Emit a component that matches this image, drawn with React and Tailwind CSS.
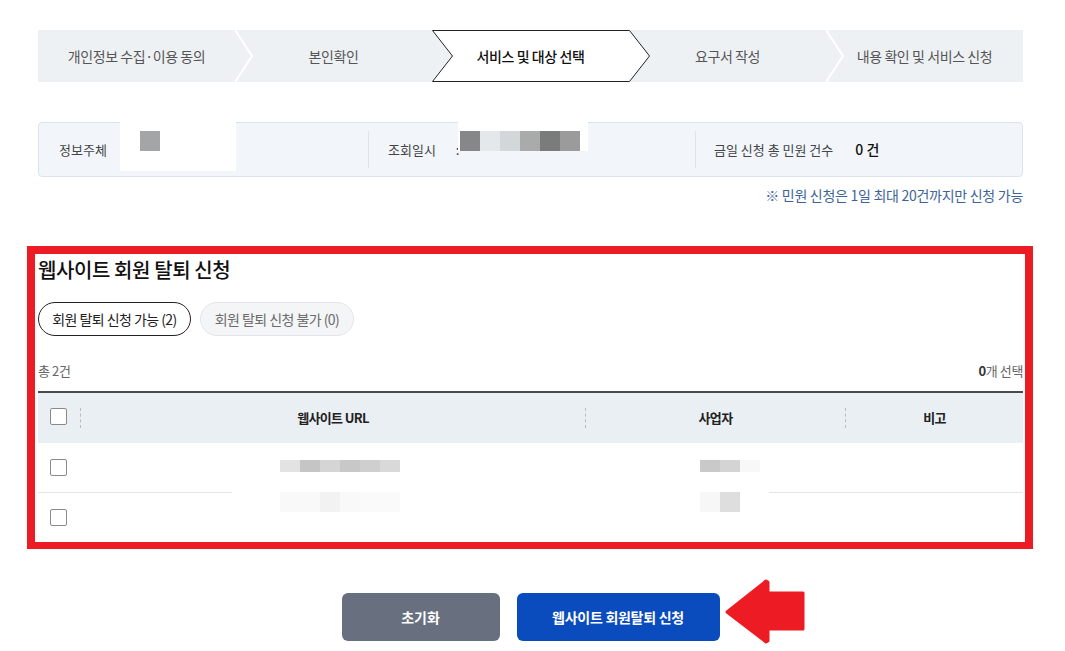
import React from 'react';

const font = { fontFamily: '"Noto Sans CJK KR", "Noto Sans", sans-serif' };

const steps = ['개인정보 수집·이용 동의', '본인확인', '서비스 및 대상 선택', '요구서 작성', '내용 확인 및 서비스 신청'];
const ACTIVE = 2;

function Steps() {
  return (
    <div className="flex h-[52px] bg-[#eef1f4]">
      {steps.map((label, i) => {
        const isActive = i === ACTIVE;
        const showSep = i < steps.length - 1 && i !== ACTIVE && i + 1 !== ACTIVE;
        return (
          <div key={label} className={`relative flex flex-1 items-center justify-center ${isActive ? 'z-20' : ''}`}>
            {isActive && (
              <svg className="absolute left-0 top-0 h-[52px] w-[218px]" viewBox="0 0 218 52">
                <path d="M0.5 0.5 L197.5 0.5 L217.5 26 L197.5 51.5 L0.5 51.5 L20.5 26 Z" fill="#fff" stroke="#222" strokeWidth="1" />
              </svg>
            )}
            <span
              className={`relative text-[14px] tracking-[-0.03em] ${isActive ? 'font-medium text-[#111]' : 'text-[#555]'}`}
            >
              {label}
            </span>
            {showSep && (
              <svg className="absolute left-full top-0 z-10 h-[52px] w-[20px]" viewBox="0 0 20 52">
                <polyline points="0,0 17,26 0,52" fill="none" stroke="#fff" strokeWidth="2" />
              </svg>
            )}
          </div>
        );
      })}
    </div>
  );
}

function InfoBox() {
  return (
    <div className="relative mt-[40px]">
      <div className="flex h-[55px] items-center rounded-[4px] border border-[#dbe4ee] bg-[#f2f6fa] text-[13px] text-[#444]">
        <div className="flex w-[329px] items-center pl-[20px]">
          <span>정보주체</span>
        </div>
        <div className="h-[37px] w-px bg-[#dde3ea]" />
        <div className="flex w-[326px] items-center pl-[19px]">
          <span>조회일시</span>
          <span className="ml-[20px] text-[#333]">:</span>
        </div>
        <div className="h-[37px] w-px bg-[#dde3ea]" />
        <div className="flex flex-1 items-center pl-[18px]">
          <span>금일 신청 총 민원 건수</span>
          <span className="ml-[22px] text-[14px] font-medium text-[#111]">0 건</span>
        </div>
      </div>
      {/* masked values */}
      <div className="absolute left-[82px] top-[-11px] h-[60px] w-[116px] bg-white">
        <div className="ml-[20px] mt-[20px] h-[20px] w-[20px] bg-[#a3a5a6]" />
      </div>
      <div className="absolute left-[420px] top-[-4px] flex h-[33px] w-[130px] items-end bg-white">
        <div className="ml-[2px] flex h-[20px]">
          {['#858788', '#e5e8eb', '#d4d7da', '#a9aaaa', '#7a7c7c', '#9b9b9b'].map((c, i) => (
            <div key={i} className="h-[20px] w-[20px]" style={{ background: c }} />
          ))}
        </div>
      </div>
    </div>
  );
}

function Checkbox() {
  return <div className="h-[17px] w-[17px] rounded-[2px] border-[1.5px] border-[#8a8a8a] bg-white" />;
}

function Blocks({ colors, h }) {
  return (
    <div className="flex">
      {colors.map((c, i) => (
        <div key={i} className="w-[20px]" style={{ background: c, height: h }} />
      ))}
    </div>
  );
}

function Table() {
  return (
    <div className="relative mt-[9px] border-t-2 border-[#4a4a4a]">
      <div className="grid h-[50px] grid-cols-[42px_505px_260px_178px] items-center bg-[#eaeff3] text-[13px] font-bold tracking-[-0.05em] text-[#222]">
        <div className="flex items-center pl-[12px]">
          <div className="-mt-[4px]">
            <Checkbox />
          </div>
        </div>
        <div className="flex h-[20px] items-center justify-center border-l border-dashed border-[#b4bcc4]">웹사이트 URL</div>
        <div className="flex h-[20px] items-center justify-center border-l border-dashed border-[#b4bcc4]">사업자</div>
        <div className="flex h-[20px] items-center justify-center border-l border-dashed border-[#b4bcc4]">비고</div>
      </div>
      <div className="grid h-[50px] grid-cols-[42px_505px_260px_178px] items-center border-b border-[#e6e6e6]">
        <div className="flex items-center pl-[12px]">
          <Checkbox />
        </div>
        <div />
        <div />
        <div />
      </div>
      <div className="grid h-[49px] grid-cols-[42px_505px_260px_178px] items-center">
        <div className="flex items-center pl-[12px]">
          <Checkbox />
        </div>
        <div />
        <div />
        <div />
      </div>
      {/* masked cells */}
      <div className="absolute left-[194px] top-[97px] h-[6px] w-[537px] bg-white" />
      <div className="absolute left-[242px] top-[67px]">
        <Blocks colors={['#e3e3e3', '#c5c5c5', '#d5d5d5', '#c8c8c8', '#cfcfcf', '#d9d9d9']} h={12} />
      </div>
      <div className="absolute left-[242px] top-[99px]">
        <Blocks colors={['#f9f9f9', '#f9f9f9', '#f1f2f1', '#f9f9f9', '#fafafa', '#fafafa']} h={20} />
      </div>
      <div className="absolute left-[662px] top-[67px]">
        <Blocks colors={['#c9c9c9', '#d4d4d4', '#f8f8f8']} h={12} />
      </div>
      <div className="absolute left-[662px] top-[99px]">
        <Blocks colors={['#f6f7f6', '#dedede']} h={20} />
      </div>
    </div>
  );
}

export default function App() {
  return (
    <div className="min-h-[651px] w-[1065px] bg-white pt-[30px]" style={font}>
      <div className="ml-[38px] w-[985px]">
        <Steps />
        <InfoBox />
        <p className="mt-[8px] text-right text-[14px] tracking-[-0.02em] text-[#3d6499]">※ 민원 신청은 1일 최대 20건까지만 신청 가능</p>
      </div>

      <div className="ml-[27px] mt-[40px] w-[1006px] border-[8px] border-b-[7px] border-[#ed1c24] pl-[3px] pr-[2px] pt-[2px]">
        <h2 className="h-[28px] text-[20px] font-medium leading-[28px] tracking-[-0.02em] text-[#111]">웹사이트 회원 탈퇴 신청</h2>
        <div className="mt-[18px] flex gap-[9px]">
          <button className="flex h-[34px] w-[153px] items-center justify-center rounded-full border border-[#222] text-[14px] tracking-[-0.04em] text-[#222]">
            회원 탈퇴 신청 가능 (2)
          </button>
          <button className="flex h-[34px] w-[154px] items-center justify-center rounded-full border border-[#e3e5e8] bg-[#f4f5f7] text-[14px] tracking-[-0.04em] text-[#6b6b6b]">
            회원 탈퇴 신청 불가 (0)
          </button>
        </div>
        <div className="mt-[24px] flex h-[22px] items-center justify-between text-[13px] tracking-[-0.03em] text-[#666]">
          <span>총 2건</span>
          <span>
            <b className="font-bold text-[#333]">0</b>개 선택
          </span>
        </div>
        <Table />
      </div>

      <div className="ml-[38px] mt-[44px] flex w-[985px] justify-center">
        <div className="relative flex gap-[17px]">
          <button className="h-[48px] w-[158px] rounded-[6px] bg-[#68707f] text-[14px] font-bold text-white">초기화</button>
          <button className="h-[48px] w-[203px] rounded-[6px] bg-[#0a4bbd] text-[14px] font-bold tracking-[-0.02em] text-white">
            웹사이트 회원탈퇴 신청
          </button>
          <svg className="absolute left-[calc(100%+4px)] top-[-14px] h-[65px] w-[82px]" viewBox="0 0 82 65">
            <polygon
              points="3,33 42,2 44,3 44,14 79,14 79,50 44,50 44,62 42,63"
              fill="#ed1c24"
              stroke="#ed1c24"
              strokeWidth="3"
              strokeLinejoin="round"
            />
          </svg>
        </div>
      </div>
    </div>
  );
}
